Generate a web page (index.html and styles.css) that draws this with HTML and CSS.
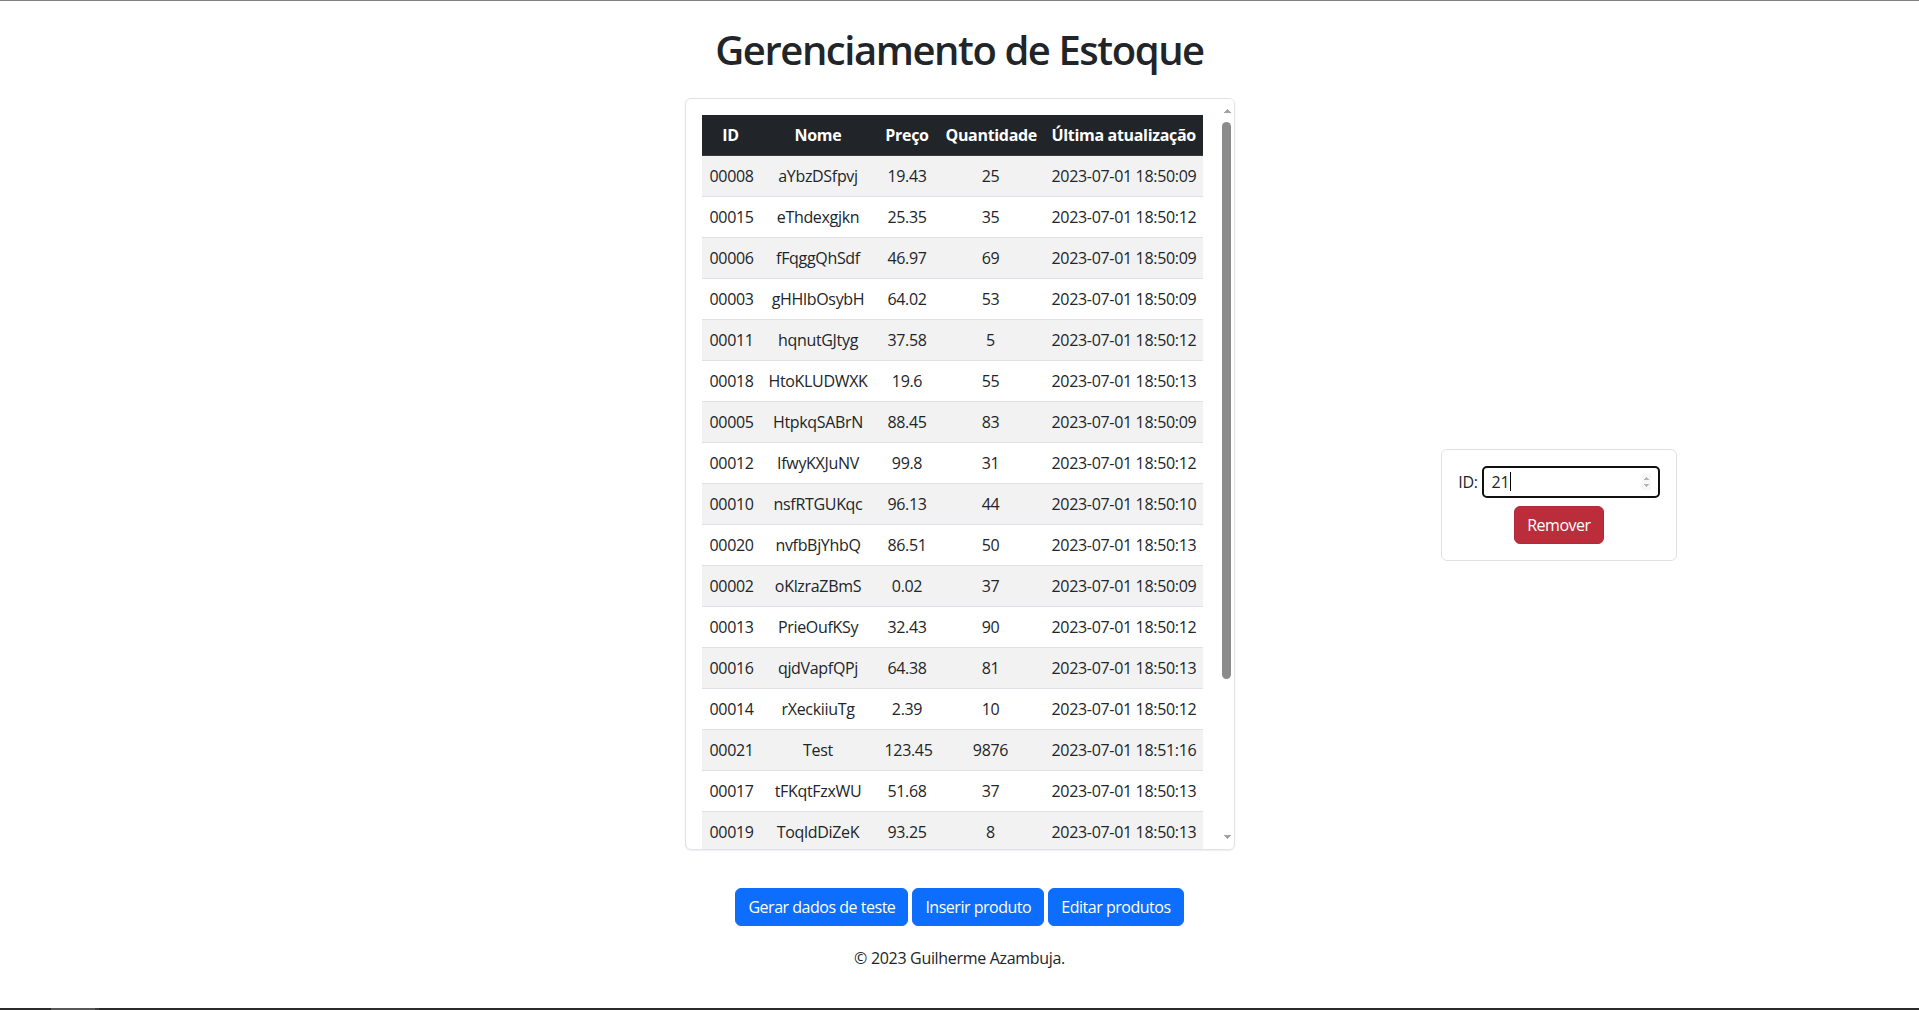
FILE: index.html
```html
<!DOCTYPE html>
<html lang="pt-BR">
<head>
<meta charset="utf-8">
<title>Gerenciamento de Estoque</title>
<link rel="stylesheet" href="styles.css">
</head>
<body>
<div class="topline"></div>
<div class="layout">
  <div class="side"></div>
  <main class="main">
    <h1 class="title">Gerenciamento de Estoque</h1>
    <div class="table-card">
      <div class="table-viewport">
        <table class="stock">
          <colgroup>
            <col class="c-id"><col class="c-name"><col class="c-price"><col class="c-qty"><col class="c-date">
          </colgroup>
          <thead>
            <tr><th>ID</th><th>Nome</th><th>Preço</th><th>Quantidade</th><th>Última atualização</th></tr>
          </thead>
          <tbody>
            <tr><td>00008</td><td>aYbzDSfpvj</td><td>19.43</td><td>25</td><td>2023-07-01 18:50:09</td></tr>
            <tr><td>00015</td><td>eThdexgjkn</td><td>25.35</td><td>35</td><td>2023-07-01 18:50:12</td></tr>
            <tr><td>00006</td><td>fFqggQhSdf</td><td>46.97</td><td>69</td><td>2023-07-01 18:50:09</td></tr>
            <tr><td>00003</td><td>gHHlbOsybH</td><td>64.02</td><td>53</td><td>2023-07-01 18:50:09</td></tr>
            <tr><td>00011</td><td>hqnutGJtyg</td><td>37.58</td><td>5</td><td>2023-07-01 18:50:12</td></tr>
            <tr><td>00018</td><td>HtoKLUDWXK</td><td>19.6</td><td>55</td><td>2023-07-01 18:50:13</td></tr>
            <tr><td>00005</td><td>HtpkqSABrN</td><td>88.45</td><td>83</td><td>2023-07-01 18:50:09</td></tr>
            <tr><td>00012</td><td>IfwyKXJuNV</td><td>99.8</td><td>31</td><td>2023-07-01 18:50:12</td></tr>
            <tr><td>00010</td><td>nsfRTGUKqc</td><td>96.13</td><td>44</td><td>2023-07-01 18:50:10</td></tr>
            <tr><td>00020</td><td>nvfbBjYhbQ</td><td>86.51</td><td>50</td><td>2023-07-01 18:50:13</td></tr>
            <tr><td>00002</td><td>oKlzraZBmS</td><td>0.02</td><td>37</td><td>2023-07-01 18:50:09</td></tr>
            <tr><td>00013</td><td>PrieOufKSy</td><td>32.43</td><td>90</td><td>2023-07-01 18:50:12</td></tr>
            <tr><td>00016</td><td>qjdVapfQPj</td><td>64.38</td><td>81</td><td>2023-07-01 18:50:13</td></tr>
            <tr><td>00014</td><td>rXeckiiuTg</td><td>2.39</td><td>10</td><td>2023-07-01 18:50:12</td></tr>
            <tr><td>00021</td><td>Test</td><td>123.45</td><td>9876</td><td>2023-07-01 18:51:16</td></tr>
            <tr><td>00017</td><td>tFKqtFzxWU</td><td>51.68</td><td>37</td><td>2023-07-01 18:50:13</td></tr>
            <tr><td>00019</td><td>ToqldDiZeK</td><td>93.25</td><td>8</td><td>2023-07-01 18:50:13</td></tr>
          </tbody>
        </table>
      </div>
      <div class="vscroll">
        <span class="vs-btn vs-up"></span>
        <span class="vs-track"><span class="vs-thumb"></span></span>
        <span class="vs-btn vs-down"></span>
      </div>
    </div>
    <div class="actions">
      <button class="btn btn-primary" type="button">Gerar dados de teste</button>
      <button class="btn btn-primary" type="button">Inserir produto</button>
      <button class="btn btn-primary" type="button">Editar produtos</button>
    </div>
    <footer class="footer">© 2023 Guilherme Azambuja.</footer>
  </main>
  <aside class="side side-right">
    <div class="remove-box">
      <div class="id-row">
        <label class="id-label">ID:</label>
        <div class="id-input"><span class="id-value">21</span><span class="caret"></span><span class="spin"></span></div>
      </div>
      <button class="btn btn-danger" type="button">Remover</button>
    </div>
  </aside>
</div>
<div class="hbar"><span class="hbar-thumb"></span><span class="hbar-edge"></span></div>
</body>
</html>
```
FILE: styles.css
```css
* { box-sizing: border-box; }
html, body { margin: 0; padding: 0; }
body {
  font-family: "Open Sans", "Noto Sans", sans-serif;
  font-size: 16px;
  line-height: 1.5;
  letter-spacing: -0.02em;
  color: #212529;
  background: #fff;
  height: 1010px;
  display: flex;
  flex-direction: column;
  overflow: hidden;
}
.topline { flex: none; height: 1px; background: #7f7f7f; }
.layout {
  flex: 1;
  min-height: 0;
  display: grid;
  grid-template-columns: 1fr 2fr 1fr;
}
.main {
  display: flex;
  flex-direction: column;
  align-items: center;
  padding-top: 25px;
}
.title {
  margin: 0 0 24px;
  font-size: 40px;
  font-weight: 600;
  line-height: 1.2;
  letter-spacing: -0.036em;
}

/* table card with its own scrollbar */
.table-card {
  display: flex;
  height: 752px;
  border: 1px solid #dee2e6;
  border-radius: 6px;
  overflow: hidden;
  background: #fff;
  box-shadow: 0 1px 2px rgba(0, 0, 0, 0.07);
}
.table-viewport {
  flex: none;
  padding: 16px 16px 0;
  overflow: hidden;
}
.vscroll {
  flex: none;
  width: 15px;
  display: flex;
  flex-direction: column;
  background: #fff;
}
.vs-btn {
  flex: none;
  height: 20px;
  background-repeat: no-repeat;
  background-size: 7px 4px;
}
.vs-up {
  background-image: conic-gradient(from 139deg at 50% 0, #a3a3a3 0 82deg, transparent 82deg);
  background-position: 5px 10px;
}
.vs-down {
  background-image: conic-gradient(from -41deg at 50% 100%, #a3a3a3 0 82deg, transparent 82deg);
  background-position: 5px 6px;
}
.vs-track { flex: 1; display: flex; flex-direction: column; }
.vs-thumb {
  margin: 3px 0 0 3px;
  width: 9px;
  height: 557px;
  border-radius: 5px;
  background: #8b8b8b;
}

.stock {
  border-collapse: collapse;
  table-layout: fixed;
  width: 501px;
}
.c-id { width: 58px; }
.c-name { width: 117px; }
.c-price { width: 61px; }
.c-qty { width: 106px; }
.c-date { width: 159px; }
.stock th, .stock td {
  padding: 8px;
  text-align: center;
  white-space: nowrap;
  border-bottom: 1px solid #dee2e6;
}
.stock thead th {
  background: #212529;
  color: #fff;
  font-weight: 700;
  border-bottom-color: #373b3e;
}
.stock tbody tr:nth-child(odd) td { background: #f2f2f2; }

.actions {
  margin-top: 38px;
  display: flex;
  gap: 4px;
}
.btn {
  font-family: inherit;
  font-size: 16px;
  line-height: 24px;
  letter-spacing: -0.03em;
  padding: 6px 12px;
  border: 1px solid transparent;
  border-radius: 6px;
  color: #fff;
  cursor: pointer;
}
.btn-primary { background: #0d6efd; border-color: #0d6efd; }
.btn-danger { background: #bb2d3b; border-color: #b02a37; }
.footer { margin-top: 20px; }

.side-right {
  display: flex;
  align-items: center;
  padding-left: 2px;
}
.remove-box {
  border: 1px solid #dee2e6;
  border-radius: 6px;
  padding: 16px;
  display: flex;
  flex-direction: column;
  align-items: center;
  gap: 8px;
}
.id-row { display: flex; align-items: center; gap: 4px; }
.id-input {
  width: 178px;
  height: 32px;
  border: 2px solid #101010;
  border-radius: 5px;
  display: flex;
  align-items: center;
  padding: 0 7px 0 8px;
  background: #fff;
}
.caret { width: 1px; height: 19px; background: #000; margin-left: 1px; }
.spin {
  margin-left: auto;
  width: 9px;
  height: 16px;
  background:
    conic-gradient(from 140deg at 50% 0, #b5b5b5 0 80deg, transparent 80deg) 2px 3px / 5px 3px no-repeat,
    conic-gradient(from -40deg at 50% 100%, #b5b5b5 0 80deg, transparent 80deg) 2px 10px / 5px 3px no-repeat,
    #f7f7f7;
}
.hbar { flex: none; height: 2px; background: #2b2b2b; display: flex; }
.hbar-thumb { margin-left: 51px; width: 44px; background: #575757; }
.hbar-edge { width: 4px; background: #3e3e3e; }
```
